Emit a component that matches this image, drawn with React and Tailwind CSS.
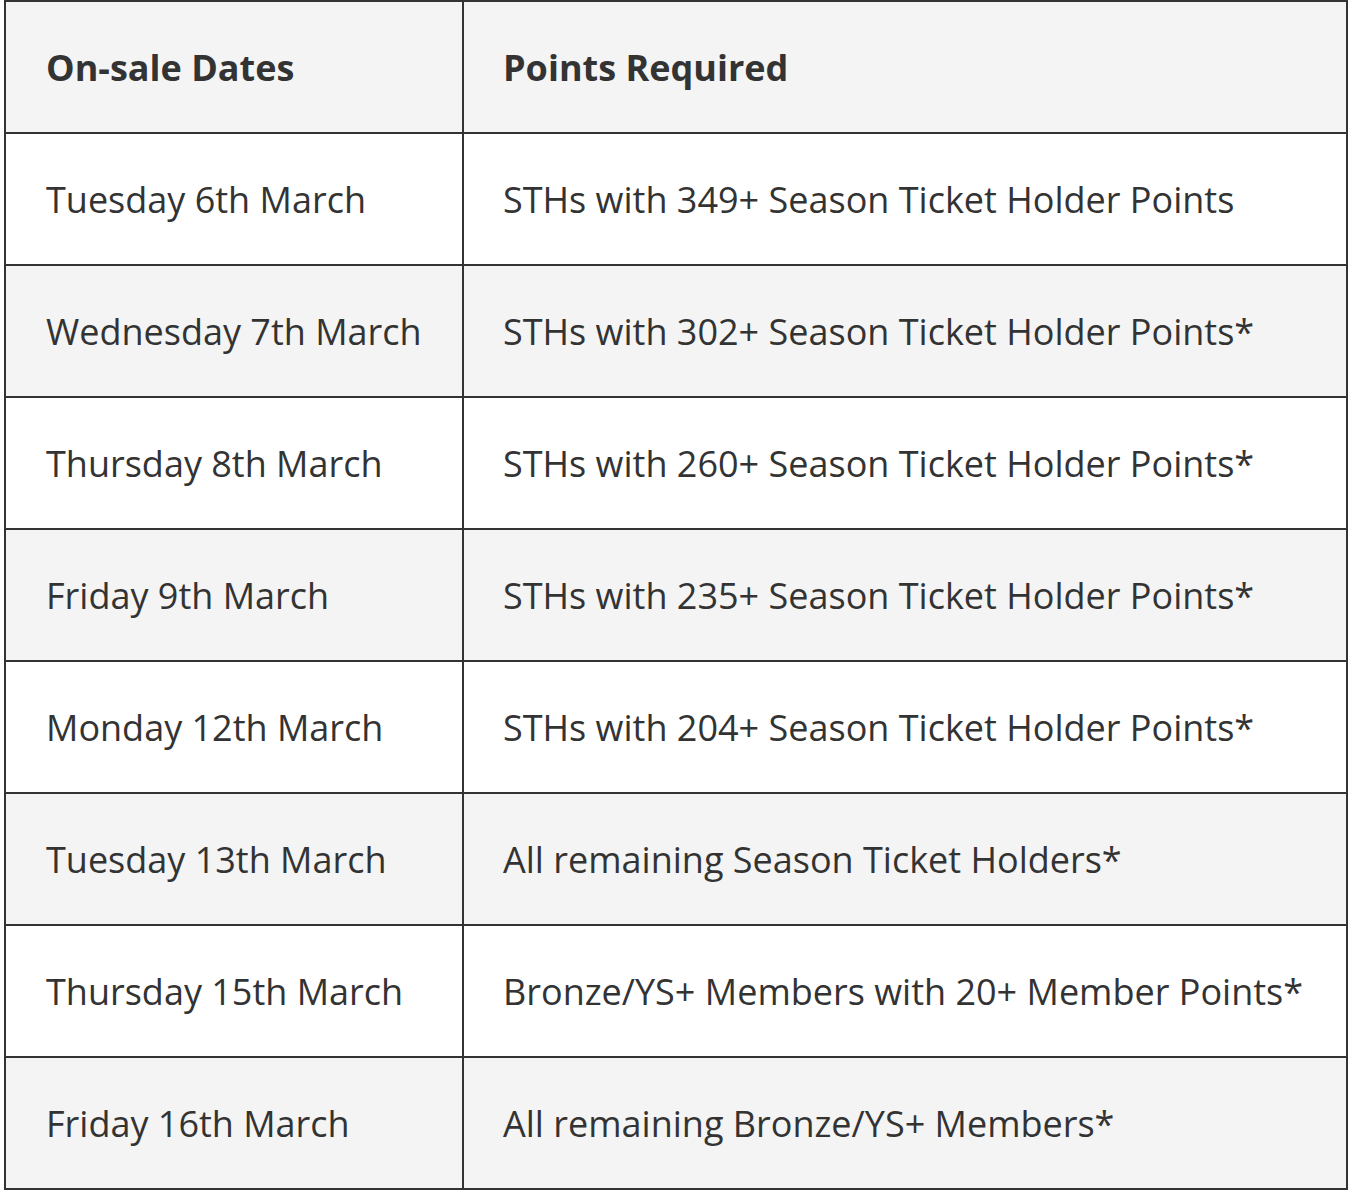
export default function App() {
  const rows = [
    ["Tuesday 6th March", "STHs with 349+ Season Ticket Holder Points"],
    ["Wednesday 7th March", "STHs with 302+ Season Ticket Holder Points*"],
    ["Thursday 8th March", "STHs with 260+ Season Ticket Holder Points*"],
    ["Friday 9th March", "STHs with 235+ Season Ticket Holder Points*"],
    ["Monday 12th March", "STHs with 204+ Season Ticket Holder Points*"],
    ["Tuesday 13th March", "All remaining Season Ticket Holders*"],
    ["Thursday 15th March", "Bronze/YS+ Members with 20+ Member Points*"],
    ["Friday 16th March", "All remaining Bronze/YS+ Members*"],
  ];
  return (
    <div className="bg-white w-[1352px] h-[1192px] pl-[4px]" style={{ fontFamily: '"Open Sans", sans-serif' }}>
      <table className="border-collapse w-[1344px] text-[#333] text-[36px] leading-[48px] table-fixed">
        <colgroup>
          <col className="w-[458px]" />
          <col />
        </colgroup>
        <thead>
          <tr className="bg-[#f4f4f4] h-[132px]">
            <th className="border-2 border-[#333] text-left font-bold pl-[40px] pr-[10px] pt-[2px]">On-sale Dates</th>
            <th className="border-2 border-[#333] text-left font-bold pl-[39px] pr-[10px] pt-[2px]">Points Required</th>
          </tr>
        </thead>
        <tbody>
          {rows.map((r, i) => (
            <tr key={i} className={(i % 2 === 1 ? "bg-[#f4f4f4]" : "bg-white") + " h-[132px]"}>
              <td className="border-2 border-[#333] pl-[40px] pr-[10px] pt-[2px] whitespace-nowrap">{r[0]}</td>
              <td className="border-2 border-[#333] pl-[39px] pr-[10px] pt-[2px] whitespace-nowrap">{r[1]}</td>
            </tr>
          ))}
        </tbody>
      </table>
    </div>
  );
}
